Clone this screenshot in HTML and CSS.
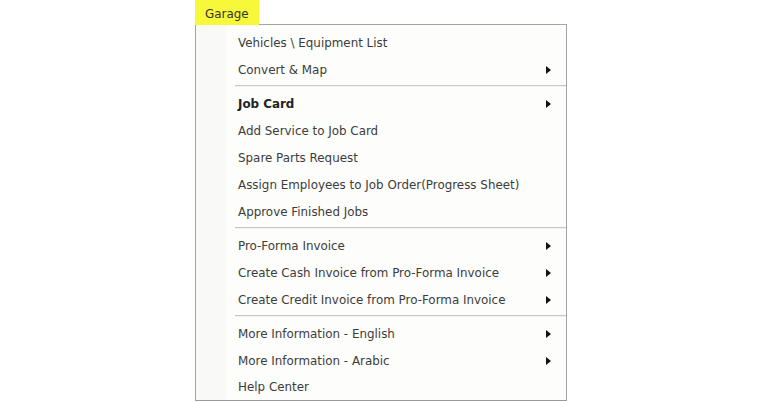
FILE: index.html
```html
<!DOCTYPE html>
<html>
<head>
<meta charset="utf-8">
<link rel="stylesheet" href="styles.css">
</head>
<body>
<div class="wrap">
  <div class="tab">Garage</div>
  <div class="menu">
    <div class="item">Vehicles \ Equipment List</div>
    <div class="item sub">Convert &amp; Map<span class="arrow"></span></div>
    <div class="sep"></div>
    <div class="item sub bold">Job Card<span class="arrow"></span></div>
    <div class="item">Add Service to Job Card</div>
    <div class="item">Spare Parts Request</div>
    <div class="item">Assign Employees to Job Order(Progress Sheet)</div>
    <div class="item">Approve Finished Jobs</div>
    <div class="sep"></div>
    <div class="item sub">Pro-Forma Invoice<span class="arrow"></span></div>
    <div class="item sub">Create Cash Invoice from Pro-Forma Invoice<span class="arrow"></span></div>
    <div class="item sub">Create Credit Invoice from Pro-Forma Invoice<span class="arrow"></span></div>
    <div class="sep"></div>
    <div class="item sub">More Information - English<span class="arrow"></span></div>
    <div class="item sub">More Information - Arabic<span class="arrow"></span></div>
    <div class="item">Help Center</div>
  </div>
</div>
</body>
</html>
```
FILE: styles.css
```css
html, body {
  margin: 0;
  padding: 0;
  background: #ffffff;
}
body {
  font-family: "DejaVu Sans", Tahoma, sans-serif;
  font-size: 11.9px;
  color: #3c3c3c;
}
.wrap {
  margin-left: 195px;
  width: 372px;
  display: flex;
  flex-direction: column;
}
.tab {
  position: relative;
  z-index: 1;
  align-self: flex-start;
  width: 64px;
  height: 25px;
  margin-bottom: -1px;
  background: #f8f83a;
  box-sizing: border-box;
  padding: 7px 0 0 10px;
  color: #333;
}
.menu {
  border: 1px solid #a4a4a4;
  border-bottom-color: #9a9a9a;
  background: linear-gradient(to right, #f9f9f7 0, #f9f9f7 30px, #fdfdfb 30px);
  padding: 4px 0 0 0;
  height: 377px;
  box-sizing: border-box;
  display: flex;
  flex-direction: column;
}
.item {
  height: 27px;
  box-sizing: border-box;
  padding-top: 2px;
  display: flex;
  align-items: center;
  padding-left: 42px;
  padding-right: 15px;
  white-space: nowrap;
}
.item.bold {
  font-weight: bold;
  color: #222;
}
.arrow {
  margin-left: auto;
  width: 0;
  height: 0;
  border-left: 5px solid #111;
  border-top: 4px solid transparent;
  border-bottom: 4px solid transparent;
}
.sep {
  height: 7px;
  display: flex;
  align-items: center;
  padding-left: 39px;
}
.sep::after {
  content: "";
  flex: 1;
  height: 2px;
  background: linear-gradient(#c6c6c6 50%, #f2f2f2 50%);
}
```
